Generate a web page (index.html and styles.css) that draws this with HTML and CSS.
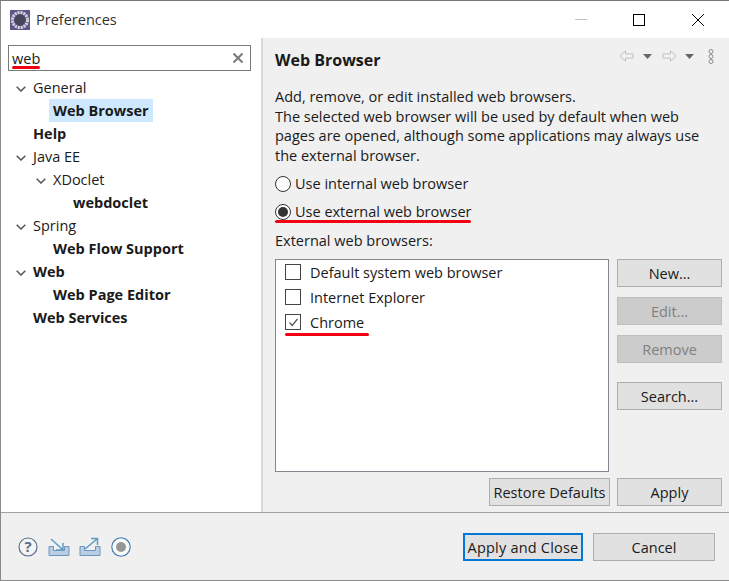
FILE: index.html
```html
<!DOCTYPE html>
<html lang="en">
<head>
<meta charset="utf-8">
<title>Preferences</title>
<link rel="stylesheet" href="styles.css">
</head>
<body>
<div class="window">
  <header class="titlebar">
    <svg class="app-icon" width="20" height="20" viewBox="0 0 20 20">
      <rect width="20" height="20" fill="#5d5786"/>
      <circle cx="10" cy="10" r="7.6" fill="none" stroke="#d4d2dc" stroke-width="3" stroke-dasharray="2.2 .8"/>
      <circle cx="10" cy="10" r="5.4" fill="#46465a"/>
    </svg>
    <span class="title-text">Preferences</span>
    <div class="win-controls">
      <svg width="58" height="38" viewBox="0 0 58 38"><path d="M22 18.5H34" stroke="#c4c4c4"/></svg>
      <svg width="58" height="38" viewBox="0 0 58 38"><rect x="22.5" y="13.5" width="11" height="11" fill="none" stroke="#000"/></svg>
      <svg width="58" height="38" viewBox="0 0 58 38"><path d="M23 13L35 25M35 13L23 25" stroke="#000" stroke-width="1"/></svg>
    </div>
  </header>
  <div class="main">
    <aside class="sidebar">
      <div class="search">
        <span class="search-text">web</span>
        <svg class="search-clear" width="12" height="12" viewBox="0 0 12 12"><path d="M1.5 1.5L10.5 10.5M10.5 1.5L1.5 10.5" stroke="#7a7a7a" stroke-width="2"/></svg>
        <i class="mark mark-search"></i>
      </div>
      <ul class="tree">
        <li class="row l0"><svg class="chev" width="10" height="6" viewBox="0 0 10 6"><path d="M.7 .7L5 5L9.3 .7" fill="none" stroke="#555" stroke-width="1.5"/></svg><span>General</span></li>
        <li class="row l1"><span class="b sel">Web Browser</span></li>
        <li class="row l0"><span class="b">Help</span></li>
        <li class="row l0"><svg class="chev" width="10" height="6" viewBox="0 0 10 6"><path d="M.7 .7L5 5L9.3 .7" fill="none" stroke="#555" stroke-width="1.5"/></svg><span>Java EE</span></li>
        <li class="row l1"><svg class="chev" width="10" height="6" viewBox="0 0 10 6"><path d="M.7 .7L5 5L9.3 .7" fill="none" stroke="#555" stroke-width="1.5"/></svg><span>XDoclet</span></li>
        <li class="row l2"><span class="b">webdoclet</span></li>
        <li class="row l0"><svg class="chev" width="10" height="6" viewBox="0 0 10 6"><path d="M.7 .7L5 5L9.3 .7" fill="none" stroke="#555" stroke-width="1.5"/></svg><span>Spring</span></li>
        <li class="row l1"><span class="b">Web Flow Support</span></li>
        <li class="row l0"><svg class="chev" width="10" height="6" viewBox="0 0 10 6"><path d="M.7 .7L5 5L9.3 .7" fill="none" stroke="#555" stroke-width="1.5"/></svg><span class="b">Web</span></li>
        <li class="row l1"><span class="b">Web Page Editor</span></li>
        <li class="row l0"><span class="b">Web Services</span></li>
      </ul>
    </aside>
    <section class="content">
      <div class="content-head">
        <h1 class="page-title">Web Browser</h1>
        <div class="nav-icons">
          <svg width="15" height="12" viewBox="0 0 15 12"><path d="M6.5 1L1 6L6.5 11V8H14V4H6.5Z" fill="#f4f4f4" stroke="#bdbdbd"/></svg>
          <svg class="drop" width="9" height="5" viewBox="0 0 9 5"><path d="M0 0H9L4.5 5Z" fill="#666"/></svg>
          <svg class="gap" width="15" height="12" viewBox="0 0 15 12"><path d="M8.5 1L14 6L8.5 11V8H1V4H8.5Z" fill="#f4f4f4" stroke="#bdbdbd"/></svg>
          <svg class="drop drop2" width="9" height="5" viewBox="0 0 9 5"><path d="M0 0H9L4.5 5Z" fill="#666"/></svg>
          <svg class="gap2" width="6" height="15" viewBox="0 0 6 15"><g fill="none" stroke="#8a8a8a"><circle cx="3" cy="2.5" r="2"/><circle cx="3" cy="7.5" r="2"/><circle cx="3" cy="12.5" r="2"/></g></svg>
        </div>
      </div>
      <p class="desc">Add, remove, or edit installed web browsers.<br>The selected web browser will be used by default when web pages are opened, although some applications may always use the external browser.</p>
      <div class="radio-row first"><span class="radio"></span><span>Use internal web browser</span></div>
      <div class="radio-row"><span class="radio on"></span><span>Use external web browser</span><i class="mark mark-radio"></i></div>
      <div class="list-label">External web browsers:</div>
      <div class="browsers">
        <div class="list">
          <div class="list-row"><span class="check"></span><span>Default system web browser</span></div>
          <div class="list-row"><span class="check"></span><span>Internet Explorer</span></div>
          <div class="list-row"><span class="check"><svg width="13" height="13" viewBox="0 0 13 13"><path d="M2.5 6.5L5.2 9.5L10.5 3" fill="none" stroke="#555" stroke-width="1.2"/></svg></span><span>Chrome</span><i class="mark mark-chrome"></i></div>
        </div>
        <div class="side-buttons">
          <button class="btn wide">New...</button>
          <button class="btn wide off">Edit...</button>
          <button class="btn wide off">Remove</button>
          <button class="btn wide search-btn">Search...</button>
        </div>
      </div>
      <div class="page-actions">
        <button class="btn restore">Restore Defaults</button>
        <button class="btn wide">Apply</button>
      </div>
    </section>
  </div>
  <footer class="footer">
    <div class="foot-icons">
      <svg width="20" height="20" viewBox="0 0 20 20"><circle cx="10" cy="10" r="9" fill="#f4f4f6" stroke="#5a6e8c" stroke-width="1.2"/><text x="10" y="15" text-anchor="middle" class="q">?</text></svg>
      <svg class="fi-a" width="22" height="20" viewBox="0 0 22 20"><path d="M1 9.5V18.5H21V9.5H16.5V13.5H5.5V9.5Z" fill="#b9cde3" stroke="#6f94bd"/><path d="M3 2L14 12M15 6V13H8" fill="none" stroke="#5b9cc4" stroke-width="1.5"/></svg>
      <svg class="fi-b" width="22" height="20" viewBox="0 0 22 20"><path d="M1 9.5V18.5H21V9.5H16.5V13.5H5.5V9.5Z" fill="#b9cde3" stroke="#6f94bd"/><path d="M6 12L18 2M12 1.5H18.5V8" fill="none" stroke="#5b9cc4" stroke-width="1.5"/></svg>
      <svg class="fi-c" width="20" height="20" viewBox="0 0 20 20"><circle cx="10" cy="10" r="9.2" fill="#fafafa" stroke="#3f78ad" stroke-width="1.1"/><circle cx="10" cy="10" r="5" fill="#969696"/></svg>
    </div>
    <div class="foot-buttons">
      <button class="btn primary">Apply and Close</button>
      <button class="btn cancel">Cancel</button>
    </div>
  </footer>
</div>
</body>
</html>
```
FILE: styles.css
```css
* { box-sizing: border-box; }
html, body { margin: 0; padding: 0; }
body {
  width: 729px;
  height: 581px;
  overflow: hidden;
  font-family: "Open Sans", "Noto Sans", sans-serif;
  font-size: 14.5px;
  color: #1a1a1a;
  background: #fff;
}
.window {
  width: 729px;
  height: 581px;
  display: flex;
  flex-direction: column;
  border: 1px solid #8a8a8a;
  border-top-color: #777;
  border-right: 0;
}
.titlebar {
  height: 37px;
  flex: none;
  display: flex;
  align-items: center;
  padding-left: 9px;
  background: #fff;
}
.app-icon { flex: none; }
.title-text { margin-left: 6px; color: #333; }
.win-controls { margin-left: auto; display: flex; margin-right: 2px; }
.win-controls svg { display: block; }
.main { flex: 1; display: flex; min-height: 0; }
.sidebar { width: 260px; flex: none; background: #fff; padding: 7px 0 0 7px; }
.search {
  position: relative;
  width: 243px;
  height: 26px;
  border: 1px solid #7a7a7a;
  display: flex;
  align-items: center;
  justify-content: space-between;
  padding: 0 6px 0 3px;
}
.search-clear { display: block; }
.mark { position: absolute; display: block; height: 3px; background: #f00010; border-radius: 1.5px; }
.mark-search { left: 3px; top: 20px; width: 28px; }
.tree { list-style: none; margin: 5px 0 0; padding: 0; }
.row { height: 23px; display: flex; align-items: center; position: relative; white-space: nowrap; }
.l0 { padding-left: 25px; }
.l1 { padding-left: 45px; }
.l2 { padding-left: 65px; }
.chev { position: absolute; top: 10px; }
.l0 .chev { left: 8px; }
.l1 .chev { left: 28px; }
.b { font-weight: 700; }
.sel { background: #cde8ff; padding: 0 4px; margin-left: -4px; height: 23px; line-height: 24px; }
.content {
  flex: 1;
  min-width: 0;
  background: #f0f0f0;
  border-left: 2px solid #d9d9d9;
  padding: 0 7px 0 12px;
  display: flex;
  flex-direction: column;
}
.content-head { height: 43px; flex: none; display: flex; align-items: center; justify-content: space-between; }
.page-title { margin: 0; font-size: 16px; font-weight: 700; }
.nav-icons { display: flex; align-items: center; margin: 0 8px 7px 0; }
.nav-icons svg { display: block; }
.drop { margin-left: 9px; }
.drop2 { margin-left: 8px; }
.gap { margin-left: 10px; }
.gap2 { margin-left: 14px; }
.desc { margin: 6px 0 0; line-height: 19.7px; width: 445px; }
.radio-row { position: relative; display: flex; align-items: center; height: 28px; gap: 4px; }
.radio-row.first { margin-top: 4px; }
.radio { width: 16px; height: 16px; border-radius: 50%; border: 1px solid #333; background: #fff; flex: none; position: relative; }
.radio.on::after { content: ""; position: absolute; inset: 2px; border-radius: 50%; background: #333; }
.mark-radio { left: 0; top: 22px; width: 196px; }
.list-label { margin-top: 5px; height: 20px; line-height: 20px; }
.browsers { display: flex; gap: 8px; margin-top: 8px; }
.list { width: 334px; height: 213px; background: #fff; border: 1px solid #828790; padding: 0 0 0 9px; }
.list-row { position: relative; display: flex; align-items: center; height: 25px; gap: 9px; }
.check { width: 16px; height: 16px; border: 1px solid #444; background: #fff; flex: none; display: flex; align-items: center; justify-content: center; }
.check svg { display: block; }
.mark-chrome { left: 0; top: 23px; width: 84px; }
.side-buttons { display: flex; flex-direction: column; gap: 10px; }
.btn {
  font: inherit;
  color: #1a1a1a;
  height: 28px;
  padding: 2px 0 0;
  background: #e1e1e1;
  border: 1px solid #adadad;
  border-radius: 0;
}
.wide { width: 105px; }
.off { background: #cccccc; border-color: #bfbfbf; color: #808080; }
.search-btn { margin-top: 9px; }
.page-actions { display: flex; justify-content: flex-end; gap: 7px; margin-top: 6px; }
.restore { width: 121px; }
.footer {
  height: 68px;
  flex: none;
  background: #f0f0f0;
  border-top: 1px solid #a0a0a0;
  display: flex;
  align-items: center;
  justify-content: space-between;
  padding: 0 14px 0 17px;
}
.foot-icons { display: flex; align-items: center; }
.foot-icons svg { display: block; }
.fi-a { margin-left: 10px; }
.fi-b { margin-left: 9px; }
.fi-c { margin-left: 10px; }
.q { font-family: "Open Sans", sans-serif; font-size: 15px; font-weight: 700; fill: #5a6e8c; }
.foot-buttons { display: flex; gap: 10px; }
.primary { width: 120px; border: 2px solid #0078d7; letter-spacing: .2px; }
.cancel { width: 122px; }
```
